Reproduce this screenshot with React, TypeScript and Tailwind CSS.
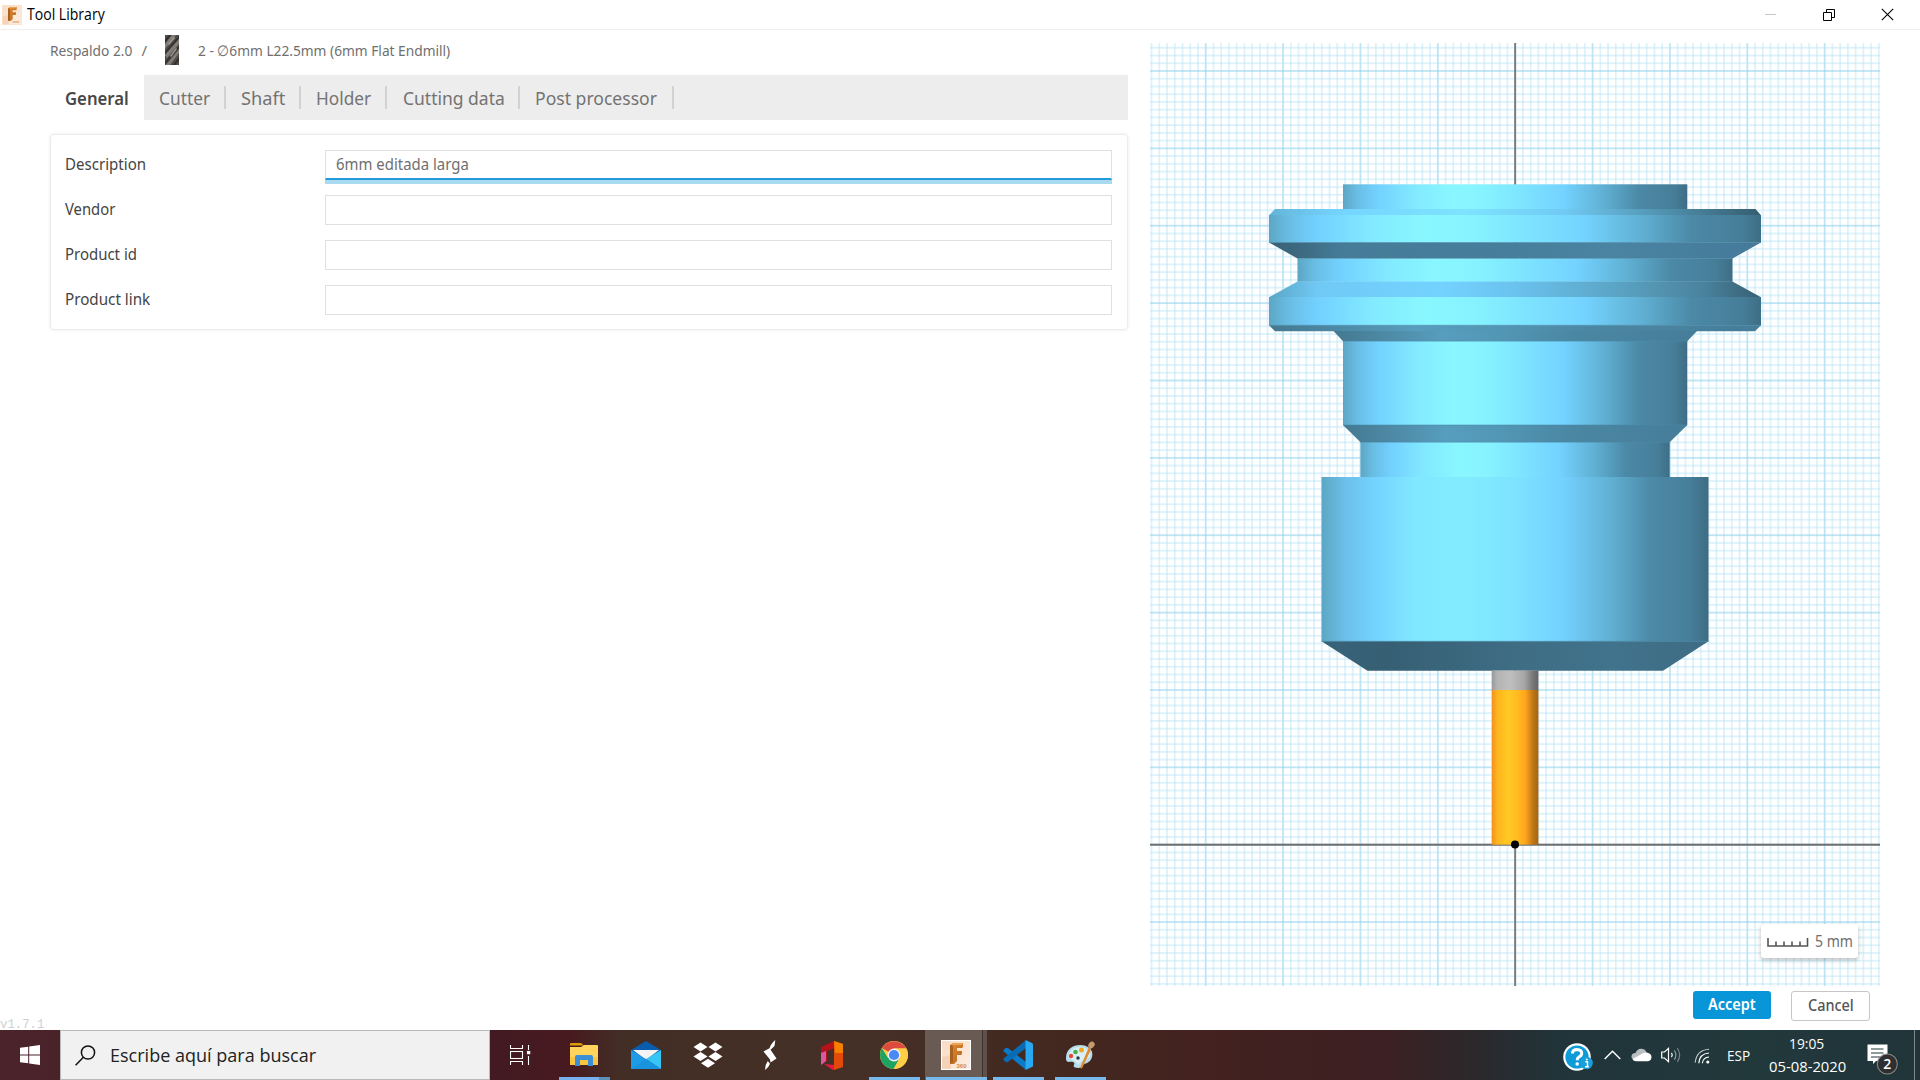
import React, { useLayoutEffect, useRef, useState } from "react";

/** Text squeezed or stretched horizontally so that it fills a given width. */
function Fit({ w, className = "", children }: { w: number; className?: string; children: React.ReactNode }) {
  const ref = useRef<HTMLSpanElement>(null);
  const [scale, setScale] = useState(1);
  useLayoutEffect(() => {
    if (ref.current) setScale(w / ref.current.offsetWidth);
  }, [w]);
  return (
    <span className={`flex shrink-0 items-center ${className}`} style={{ width: w }}>
      <span ref={ref} className="inline-block origin-left whitespace-nowrap" style={{ transform: `scaleX(${scale})` }}>
        {children}
      </span>
    </span>
  );
}

function FusionLogo({ size, full }: { size: number; full?: boolean }) {
  return (
    <svg width={size} height={size} viewBox="0 0 30 30">
      <defs>
        <linearGradient id="fbg" x1="0" y1="0" x2="1" y2="1">
          <stop offset="0" stopColor="#f9dcc4" />
          <stop offset="1" stopColor="#fdeee2" />
        </linearGradient>
        <linearGradient id="ff" x1="0" y1="0" x2="1" y2="1">
          <stop offset="0" stopColor="#e08a35" />
          <stop offset="1" stopColor="#b8661c" />
        </linearGradient>
      </defs>
      <rect width="30" height="30" fill={full ? "#fff" : "#fbe0cb"} />
      <rect x="1" y="1" width="28" height="28" fill="url(#fbg)" />
      <path d="M1 17L10 15V29H1Z" fill="#f6d3b6" />
      <path d="M9 5L12 3H22V7L21 8H16V11H21V14L20 15H16V21L13 24H9Z" fill="url(#ff)" />
      <path d="M9 5L12 6V22L9 24Z" fill="#a8611f" />
      <path d="M12 3H22L21 5H11Z" fill="#eda355" />
      {full ? (
        <text x="15.5" y="28" fontSize="6" fontWeight="700" fontFamily="Liberation Sans, sans-serif" fill="#d58a4a">
          360
        </text>
      ) : (
        <rect x="16" y="24" width="10" height="3" fill="#edbd92" />
      )}
    </svg>
  );
}

function EndmillIcon() {
  return (
    <svg width="14" height="30" viewBox="0 0 14 30">
      <rect width="14" height="30" fill="#4f4b48" />
      <path d="M0 9L7 0H11L0 14ZM0 20L14 4V9L2 23ZM1 30L14 14V18L5 30Z" fill="#827c77" />
      <path d="M0 5L4 0H6L0 8ZM0 17L14 1V3L0 19ZM0 27L14 11V13L0 29ZM8 30L14 22V25L10 30Z" fill="#2f2c2a" />
      <path d="M3 9L9 2L10 3L4 10ZM5 21L11 13L12 14L6 22Z" fill="#a39d97" />
    </svg>
  );
}

const TABS: [string, number, string][] = [
  ["Cutter", 51, "w-[82px]"],
  ["Shaft", 44.5, "w-[75px]"],
  ["Holder", 55.5, "w-[86.5px]"],
  ["Cutting data", 102, "w-[132.5px]"],
  ["Post processor", 122, "w-[154px]"],
];

const FIELDS: [string, number, string][] = [
  ["Description", 81, "6mm editada larga"],
  ["Vendor", 50, ""],
  ["Product id", 72, ""],
  ["Product link", 85.5, ""],
];

const OX = 365.2;
const OY = 801.7;
const STEP = 7.737;

function lines(origin: number, max: number) {
  const out: { p: number; major: boolean }[] = [];
  for (let i = Math.ceil(-origin / STEP); origin + i * STEP < max; i++) out.push({ p: origin + i * STEP, major: i % 10 === 0 });
  return out;
}

function ToolPreview() {
  const xs = lines(OX, 730);
  const ys = lines(OY, 943);
  const edge = "#4c8ca8";
  return (
    <svg width="730" height="943" viewBox="0 0 730 943" className="block">
      <defs>
        <linearGradient id="body">
          <stop offset="0" stopColor="#5ca6c4" />
          <stop offset="0.04" stopColor="#69bde4" />
          <stop offset="0.1" stopColor="#73d1ff" />
          <stop offset="0.21" stopColor="#82eaff" />
          <stop offset="0.32" stopColor="#89f7ff" />
          <stop offset="0.42" stopColor="#86f2ff" />
          <stop offset="0.52" stopColor="#7de4ff" />
          <stop offset="0.64" stopColor="#74d3ff" />
          <stop offset="0.76" stopColor="#5fafd2" />
          <stop offset="0.86" stopColor="#4b89a6" />
          <stop offset="0.96" stopColor="#467e99" />
          <stop offset="1" stopColor="#3f6e86" />
        </linearGradient>
        <linearGradient id="nut">
          <stop offset="0" stopColor="#5ca6c4" />
          <stop offset="0.06" stopColor="#6bbfe8" />
          <stop offset="0.14" stopColor="#74d3ff" />
          <stop offset="0.24" stopColor="#80e8ff" />
          <stop offset="0.36" stopColor="#82ecff" />
          <stop offset="0.5" stopColor="#7de3ff" />
          <stop offset="0.62" stopColor="#74d2ff" />
          <stop offset="0.75" stopColor="#60afd3" />
          <stop offset="0.85" stopColor="#4c8aa7" />
          <stop offset="0.95" stopColor="#467f9a" />
          <stop offset="1" stopColor="#3e6c83" />
        </linearGradient>
        <linearGradient id="under">
          <stop offset="0" stopColor="#386175" />
          <stop offset="0.06" stopColor="#3c697f" />
          <stop offset="0.15" stopColor="#467c98" />
          <stop offset="0.5" stopColor="#467e9b" />
          <stop offset="0.7" stopColor="#4a84a2" />
          <stop offset="1" stopColor="#44799a" />
        </linearGradient>
        <linearGradient id="upper">
          <stop offset="0" stopColor="#5ba5c5" />
          <stop offset="0.1" stopColor="#70c9f5" />
          <stop offset="0.35" stopColor="#74d2ff" />
          <stop offset="0.5" stopColor="#6ac2ee" />
          <stop offset="0.7" stopColor="#5ba5c6" />
          <stop offset="0.88" stopColor="#4a839d" />
          <stop offset="1" stopColor="#375f73" />
        </linearGradient>
        <linearGradient id="ledge">
          <stop offset="0" stopColor="#447890" />
          <stop offset="0.3" stopColor="#579dbd" />
          <stop offset="0.45" stopColor="#5397b6" />
          <stop offset="0.66" stopColor="#4a87a3" />
          <stop offset="1" stopColor="#467d99" />
        </linearGradient>
        <linearGradient id="top">
          <stop offset="0" stopColor="#64b5d8" />
          <stop offset="0.15" stopColor="#75d5ff" />
          <stop offset="0.4" stopColor="#7de3ff" />
          <stop offset="0.6" stopColor="#70caf4" />
          <stop offset="0.8" stopColor="#5192ae" />
          <stop offset="1" stopColor="#345d70" />
        </linearGradient>
        <linearGradient id="cone">
          <stop offset="0" stopColor="#38637a" />
          <stop offset="0.17" stopColor="#365f73" />
          <stop offset="0.5" stopColor="#3e6d84" />
          <stop offset="0.75" stopColor="#41738c" />
          <stop offset="1" stopColor="#3e6c84" />
        </linearGradient>
        <linearGradient id="shank">
          <stop offset="0" stopColor="#999" />
          <stop offset="0.12" stopColor="#b4b4b4" />
          <stop offset="0.4" stopColor="#bfbfbf" />
          <stop offset="0.7" stopColor="#a6a6a6" />
          <stop offset="0.9" stopColor="#737373" />
          <stop offset="1" stopColor="#666" />
        </linearGradient>
        <linearGradient id="flute">
          <stop offset="0" stopColor="#f0921b" />
          <stop offset="0.12" stopColor="#ffb41e" />
          <stop offset="0.35" stopColor="#ffc923" />
          <stop offset="0.55" stopColor="#ffbb21" />
          <stop offset="0.72" stopColor="#ffa51d" />
          <stop offset="0.88" stopColor="#bf7716" />
          <stop offset="1" stopColor="#a06612" />
        </linearGradient>
      </defs>
      <rect width="730" height="943" fill="#fff" />
      {xs.map((l) => (
        <rect key={`x${l.p}`} x={l.p - 0.9} y="0" width={1.8} height="943" fill={l.major ? "#94d4ee" : "#b5e1f5"} opacity={l.major ? 0.6 : 0.44} />
      ))}
      {ys.map((l) => (
        <rect key={`y${l.p}`} x="0" y={l.p - 0.9} width="730" height={1.8} fill={l.major ? "#94d4ee" : "#b5e1f5"} opacity={l.major ? 0.6 : 0.44} />
      ))}
      <rect x="364.2" y="0" width="1.9" height="943" fill="#7a7a7a" />
      <rect x="0" y={OY - 1} width="730" height="2" fill="#6e6e6e" />
      <g transform="translate(-1150 -43)">
        <rect x="1343" y="184.3" width="344.3" height="25" fill="url(#body)" />
        <path d="M1275 209H1755.5L1761 215.3H1269Z" fill="url(#top)" />
        <rect x="1269" y="215" width="492" height="27.7" fill="url(#body)" />
        <path d="M1269 242.5H1761L1732.5 258.5H1297.5Z" fill="url(#under)" />
        <rect x="1297.5" y="258.3" width="435" height="23.5" fill="url(#body)" />
        <path d="M1297.5 281.5H1732.5L1761 297.2H1269Z" fill="url(#upper)" />
        <rect x="1269" y="297" width="492" height="28.5" fill="url(#body)" />
        <path d="M1269 325.3H1761L1755 331.3H1275Z" fill="url(#ledge)" />
        <path d="M1333.5 331H1697L1687.3 341.3H1343Z" fill="url(#ledge)" />
        <rect x="1343" y="341" width="344.3" height="84.3" fill="url(#body)" />
        <path d="M1343 425H1687.3L1669.7 442.3H1360.5Z" fill="url(#ledge)" />
        <rect x="1360.5" y="442" width="309.2" height="35.3" fill="url(#body)" />
        <rect x="1321.5" y="477" width="387" height="164.7" fill="url(#nut)" />
        <path d="M1321.5 641.3H1708.5L1663 670.7H1367.5Z" fill="url(#cone)" />
        <path d="M1269 242.5H1761M1269 325.3H1761M1343 425H1687M1321.5 641.3H1708.5M1297.5 258.5H1732.5M1343 341.2H1687M1360.5 442.3H1669.7" stroke={edge} strokeWidth="0.8" opacity="0.7" />
        <rect x="1491.8" y="670.5" width="46.6" height="19.7" fill="url(#shank)" />
        <rect x="1491.8" y="690" width="46.6" height="154.7" fill="url(#flute)" />
        <circle cx="1515" cy="844.6" r="4" fill="#000" />
      </g>
    </svg>
  );
}

function Slot({ children, active, running, stacked }: { children: React.ReactNode; active?: boolean; running?: boolean; stacked?: boolean }) {
  return (
    <div className={`relative flex h-full w-[62px] items-center justify-center ${active ? "bg-[#695a53]" : ""}`}>
      {children}
      {running && <div className="absolute bottom-0 left-[6px] h-[3px] w-[51px] bg-[#76b9ed]" />}
      {stacked && (
        <div className="absolute bottom-0 left-[6px] flex h-[3px] w-[51px]">
          <div className="w-[40px] bg-[#76b0ee]" />
          <div className="flex-1 bg-[#5e8fb8]" />
        </div>
      )}
      {active && (
        <>
          <div className="absolute top-0 right-0 h-full w-[5px] border-l border-[#3f332e] bg-[#5f514a]" />
          <div className="absolute bottom-0 left-[1px] h-[3px] w-[61px] bg-[#76b9ed]" />
        </>
      )}
    </div>
  );
}

function Taskbar() {
  return (
    <div className="flex h-[50px] w-full shrink-0 bg-[linear-gradient(90deg,#4a232b_0px,#431a22_490px,#471a1f_570px,#432e26_620px,#453028_850px,#43281f_1060px,#43221f_1200px,#3d2023_1380px,#2b292c_1480px,#20343a_1560px,#22393c_1750px,#20343a_1920px)]">
      <div className="flex h-full w-[60px] items-center justify-center">
        <svg width="20" height="20" viewBox="0 0 20 20" fill="#fff">
          <path d="M0 2.8L8.2 1.7V9.4H0ZM9.2 1.5L20 0V9.4H9.2ZM0 10.5H8.2V18.3L0 17.2ZM9.2 10.5H20V20L9.2 18.5Z" />
        </svg>
      </div>
      <div className="flex h-full w-[430px] items-center border border-[#b9b9b9] bg-[#f1f1f1] pl-[14px]">
        <svg width="21" height="21" viewBox="0 0 21 21" fill="none" stroke="#111" strokeWidth="1.5">
          <circle cx="13" cy="7.5" r="6.6" />
          <path d="M8.4 12.3L0.6 20.2" />
        </svg>
        <Fit w={206.5} className="ml-[13.5px] font-['Open_Sans',sans-serif] text-[18.5px] leading-6 text-[#222]">
          Escribe aquí para buscar
        </Fit>
      </div>
      <div className="flex h-full w-[63px] items-center pl-[20px]">
        <svg width="21" height="20" viewBox="0 0 21 20" fill="none" stroke="#fff" strokeWidth="1.1">
          <path d="M0.5 0V3.5H12.5V0M0.5 20V16.5H12.5V20M18.5 0V5M18.5 11V20" />
          <rect x="0.5" y="6.5" width="12" height="7" />
          <rect x="17.5" y="6.5" width="2.2" height="2.2" fill="#fff" />
        </svg>
      </div>
      <Slot stacked>
        <svg width="28" height="24" viewBox="0 0 28 24">
          <path d="M0 1Q0 0 1 0H11L14 2.5H0Z" fill="#e09b00" />
          <path d="M0 4H11L14 2H27Q28 2 28 3V21Q28 22 27 22H1Q0 22 0 21Z" fill="#ffd35c" />
          <path d="M0 14H28V21Q28 22 27 22H1Q0 22 0 21Z" fill="#fbc441" />
          <path d="M5 23V14Q5 12 7 12H21Q23 12 23 14V23H18V17H10V23Z" fill="#3a8fd6" />
        </svg>
      </Slot>
      <Slot>
        <svg width="30" height="28" viewBox="0 0 30 28">
          <path d="M0 9L15 0L30 9V14H0Z" fill="#0a5cad" />
          <path d="M2 9H28L15 19Z" fill="#f3f3f3" />
          <path d="M0 9L15 18L30 28H0Z" fill="#1d9be6" />
          <path d="M30 9L15 18L30 28Z" fill="#35c6f6" />
          <path d="M0 28L15 18L30 28Z" fill="#1a93df" />
        </svg>
      </Slot>
      <Slot>
        <svg width="30" height="26" viewBox="0 0 30 26" fill="#fff">
          <path d="M7.5 0.5L14.5 5L7.5 9.5L0.5 5ZM22.5 0.5L29.5 5L22.5 9.5L15.5 5ZM7.5 10L14.5 14.5L7.5 19L0.5 14.5ZM22.5 10L29.5 14.5L22.5 19L15.5 14.5ZM15 16.8L22 21.3L15 25.8L8 21.3Z" />
        </svg>
      </Slot>
      <Slot>
        <svg width="14" height="30" viewBox="0 0 14 30" fill="#fff">
          <path d="M12.3 0L11.5 6L6 11.3Q6.5 4.5 12.3 0ZM0.5 11.5L6.5 8.3L13.5 18.5L7.5 22.5L7 19.5ZM2 30Q1.8 25 4.8 21L7 23.8Q5.5 28 2 30Z" />
        </svg>
      </Slot>
      <Slot>
        <svg width="24" height="29" viewBox="0 0 24 29">
          <path d="M1 6L14 0L15 7L7 10V20L1 24Z" fill="#b5121b" />
          <path d="M1 12L6 10V20L1 24Z" fill="#d65aa0" />
          <path d="M4 23L15 24V28.5L13 29Z" fill="#e8173e" />
          <path d="M14 0L23 3V26L14 29V22Z" fill="#e14a08" />
          <path d="M14 0L23 3V12H15Z" fill="#f58000" />
        </svg>
      </Slot>
      <Slot running>
        <svg width="28" height="28" viewBox="0 0 28 28">
          <circle cx="14" cy="14" r="14" fill="#ffcd46" />
          <path d="M14 14L1.9 7A14 14 0 0 1 26.1 7.5H14Z" fill="#dd4b3e" />
          <path d="M1.9 7A14 14 0 0 0 13.5 28L19.6 17.2L14 14L8 17Z" fill="#1da362" />
          <path d="M14 28A14 14 0 0 0 26.3 7.5H14L19.8 17Z" fill="#ffcd46" />
          <circle cx="14" cy="14" r="6.5" fill="#f1f1f1" />
          <circle cx="14" cy="14" r="5.1" fill="#4a8af4" />
        </svg>
      </Slot>
      <Slot active>
        <FusionLogo size={30} full />
      </Slot>
      <Slot running>
        <svg width="30" height="30" viewBox="0 0 30 30">
          <path d="M0.5 11.5Q0 10.5 1 9.5L2.8 8Q3.8 7.3 4.8 8L23 22V30L1 11.8Z" fill="#0a7bc8" />
          <path d="M0.5 18.5Q0 19.5 1 20.5L2.8 22Q3.8 22.7 4.8 22L23 8V0L1 18.2Z" fill="#0a6bb5" />
          <path d="M22.5 0L29 3Q30 3.5 30 4.5V25.5Q30 26.5 29 27L22.5 30Z" fill="#2aa8f2" />
        </svg>
      </Slot>
      <Slot running>
        <svg width="30" height="30" viewBox="0 0 30 30">
          <path d="M1 18C1 9 8 5 15 5C24 5 29 11 27 17C25 24 19 23 18 25C17 28 13 29 9 27C8 25 11 23 8 22C5 21 1 24 1 18Z" fill="#b9dcea" />
          <path d="M3 17C4 10 10 7 15 7C22 7 26 12 25 16C22 21 15 20 13 25C11 20 5 20 3 17Z" fill="#d9eff6" />
          <circle cx="6" cy="16" r="2.2" fill="#e04b38" />
          <circle cx="10.5" cy="12" r="2.3" fill="#4aae45" />
          <circle cx="16.5" cy="10" r="2.5" fill="#f5a81d" />
          <circle cx="13" cy="18" r="1.7" fill="#27363e" />
          <path d="M15 28L23.5 8L26 9.5L17 28.5Z" fill="#e08a2d" />
          <path d="M23 6Q24 1 28 1.5L30 4Q29 8 25 9Z" fill="#c79a6c" />
        </svg>
      </Slot>
      <div className="flex-1" />
      <div className="flex h-full w-[358px] shrink-0 items-center">
        <svg width="30" height="28" viewBox="0 0 30 28" className="mt-[3px] ml-[1px] shrink-0">
          <circle cx="14" cy="14" r="13.8" fill="#fff" />
          <circle cx="14" cy="14" r="11.6" fill="#0e9bd8" />
          <path d="M9.3 10.5Q9.8 6.5 14 6.5Q18.7 6.7 18.7 10.3Q18.7 12.7 16 14Q14.2 15 14.2 17.3" fill="none" stroke="#fff" strokeWidth="3" />
          <circle cx="14.2" cy="21" r="1.8" fill="#fff" />
          <circle cx="23.5" cy="20" r="6.3" fill="#1a9fdc" />
          <path d="M22.3 18.8H24.5V23.5M22 23.8H25.8" stroke="#fff" strokeWidth="1.4" fill="none" />
          <circle cx="23.8" cy="16.4" r="1" fill="#fff" />
        </svg>
        <svg width="17" height="10" viewBox="0 0 17 10" fill="none" stroke="#fff" strokeWidth="1.4" className="ml-[10.5px] shrink-0">
          <path d="M0.7 9L8.5 1.2L16.3 9" />
        </svg>
        <svg width="21" height="14" viewBox="0 0 21 14" className="ml-[10.5px] shrink-0">
          <path d="M4 12Q0 11 0.5 8Q1 5 4.5 5Q6 1 10 0.8Q14 0.8 15.5 4.2L8 10Z" fill="#b9bfc0" />
          <path d="M1.5 11L12.5 5Q14 4 16 4.6Q20.5 5.6 20.5 9.2Q20.3 12.8 17 13.2H4.5Q2 13 1.5 11Z" fill="#fff" />
        </svg>
        <svg width="21" height="18" viewBox="0 0 21 18" fill="none" stroke="#fff" strokeWidth="1.2" className="ml-[9px] shrink-0">
          <path d="M0.7 6H3.5L7.5 2.3V15.7L3.5 12H0.7Z" />
          <path d="M10.5 6.8Q12 9 10.5 11.2" />
          <path d="M13.3 4.3Q16.5 9 13.3 13.7" stroke="#8b989a" />
          <path d="M16.3 2Q21 9 16.3 16" stroke="#75858a" />
        </svg>
        <svg width="16" height="16" viewBox="0 0 16 16" fill="none" stroke="#fff" strokeWidth="1.2" className="mt-[1px] ml-[12px] shrink-0">
          <path d="M8.3 15.2Q9 9.5 15 9M4.8 15.2Q5.5 5.6 15 5" />
          <path d="M1.2 14.6Q2.5 2 15 1.2" stroke="#c3cccd" strokeWidth="1.1" />
          <circle cx="13.8" cy="14" r="1.6" fill="#fff" stroke="none" />
        </svg>
        <Fit w={23.5} className="ml-[17px] font-['Open_Sans',sans-serif] text-[15px] text-white">
          ESP
        </Fit>
        <div className="ml-[18.5px] flex w-[77px] shrink-0 flex-col items-center font-['Open_Sans',sans-serif] text-[15px] leading-[23px] text-white">
          <Fit w={35} className="-ml-[2px]">
            19:05
          </Fit>
          <Fit w={77}>05-08-2020</Fit>
        </div>
        <svg width="32" height="32" viewBox="0 0 32 32" className="mt-[9px] ml-[20.5px] shrink-0">
          <path d="M0.5 0.5H20.5V17H9L6 20V17H0.5Z" fill="#fff" />
          <path d="M4 5H16.5M4 9H16.5M4 13H13" stroke="#22393c" strokeWidth="1.2" />
          <circle cx="20.3" cy="20" r="10" fill="#2f2f31" stroke="#888" strokeWidth="1.1" />
          <text x="20.3" y="25" textAnchor="middle" fontSize="14" fontWeight="600" fontFamily="Open Sans, sans-serif" fill="#fff">
            2
          </text>
        </svg>
        <div className="ml-auto h-full w-[6px] border-l border-[#7d898b]" />
      </div>
    </div>
  );
}

export default function App() {
  return (
    <div className="flex h-[1080px] w-[1920px] flex-col overflow-hidden bg-white font-['Noto_Sans',sans-serif]">
      <header className="flex h-[30px] shrink-0 items-center border-b border-[#efefef] bg-white pl-[2px]">
        <FusionLogo size={20} />
        <Fit w={78} className="-mt-[2px] ml-[5px] font-['Open_Sans',sans-serif] text-[15.5px] leading-5 text-black">
          Tool Library
        </Fit>
        <div className="ml-auto flex items-center pr-[26px]">
          <div className="h-px w-[11px] bg-[#c8c8c8]" />
          <svg width="12" height="12" viewBox="0 0 12 12" fill="none" stroke="#000" className="ml-[47px]">
            <path d="M0.5 3.5H8.5V11.5H0.5ZM3.5 3.5V0.5H11.5V8.5H8.5" />
          </svg>
          <svg width="13" height="13" viewBox="0 0 13 13" stroke="#000" strokeWidth="1.1" className="ml-[46.5px]">
            <path d="M0.8 0.8L12.2 12.2M12.2 0.8L0.8 12.2" />
          </svg>
        </div>
      </header>

      <main className="flex h-[1000px] min-h-0">
        <section className="flex w-[1150px] shrink-0 flex-col">
          <div className="flex h-[45px] items-center pb-[5px] pl-[50px] text-[15px] leading-5 text-[#6f6f6f]">
            <Fit w={82.5} className="-mt-[1px]">
              Respaldo 2.0
            </Fit>
            <Fit w={6} className="-mt-[1px] ml-[9px]">
              /
            </Fit>
            <div className="mr-[19px] ml-[17.5px]">
              <EndmillIcon />
            </div>
            <Fit w={252.5} className="-mt-[1px]">
              2 - ∅6mm L22.5mm (6mm Flat Endmill)
            </Fit>
          </div>

          <nav className="ml-[50px] flex h-[45px] w-[1078px] bg-[#ededed] text-[18px] leading-6 text-[#737373]">
            <div className="flex w-[93.5px] items-center bg-white pl-[15px] font-semibold text-[#484848]">
              <Fit w={64}>General</Fit>
            </div>
            {TABS.map(([name, w, box]) => (
              <div key={name} className={`my-[11px] flex items-center border-r-2 border-[#d2d2d2] pl-[15.5px] ${box}`}>
                <Fit w={w}>{name}</Fit>
              </div>
            ))}
          </nav>

          <div className="mt-[14px] ml-[49.5px] flex h-[196px] w-[1078px] flex-col gap-[15px] rounded-[4px] border border-[#ececec] px-[14.5px] pt-[15px] shadow-[0_0_3px_rgba(0,0,0,0.10)]">
            {FIELDS.map(([label, w, value], i) => (
              <div key={label} className="flex h-[30px] items-center text-[16px] leading-5 text-[#444]">
                <div className="w-[260px]">
                  <Fit w={w} className="-mt-[3px]">
                    {label}
                  </Fit>
                </div>
                <div
                  className={`flex h-full w-[787.5px] items-center border pl-[10px] text-[#707070] ${
                    i === 0 ? "border-[#e0e0e0] border-b-2 border-b-[#229bd8] shadow-[0_4px_0_#a8daf2]" : "border-[#e0e0e0]"
                  }`}
                >
                  {value && (
                    <Fit w={132.5} className="-mt-[2px]">
                      {value}
                    </Fit>
                  )}
                </div>
              </div>
            ))}
          </div>

          <div className="mt-auto h-[12px] font-['Liberation_Mono',monospace] text-[12.3px] leading-[15px] text-[#d0d0d0]">v1.7.1</div>
        </section>

        <section className="flex w-[770px] flex-col pt-[13px]">
          <div className="relative h-[943px] w-[730px]">
            <ToolPreview />
            <div className="absolute right-[22.5px] bottom-[28px] flex h-[34px] w-[97px] items-center rounded-[3px] bg-white pl-[6px] text-[17px] leading-5 text-[#707070] shadow-[0_2px_4px_rgba(0,0,0,0.25)]">
              <svg width="42" height="9" viewBox="0 0 42 9" fill="none" stroke="#555" strokeWidth="1.6" className="mt-[3px]">
                <path d="M1 0V8H40.5V0M9 8V3.5M17 8V3.5M25 8V3.5M33 8V3.5" />
              </svg>
              <Fit w={38} className="ml-[6px]">
                5 mm
              </Fit>
            </div>
          </div>
          <div className="mt-[5px] flex items-start justify-end gap-[20px] pr-[50px] text-[16px] leading-5">
            <button className="flex h-[28px] w-[78px] items-center justify-center rounded-[3px] bg-[#0896d9] font-semibold text-white">
              <Fit w={48} className="-mt-[2px]">
                Accept
              </Fit>
            </button>
            <button className="flex h-[30px] w-[79px] items-center justify-center rounded-[3px] border-[1.5px] border-[#c6c6c6] bg-white font-medium text-[#555]">
              <Fit w={46} className="-mt-[2px]">
                Cancel
              </Fit>
            </button>
          </div>
        </section>
      </main>

      <Taskbar />
    </div>
  );
}
